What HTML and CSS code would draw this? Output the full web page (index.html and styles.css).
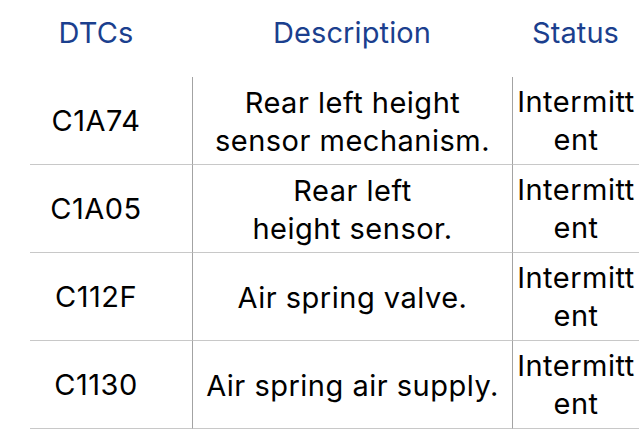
FILE: index.html
```html
<!DOCTYPE html>
<html>
<head>
<meta charset="utf-8">
<link rel="stylesheet" href="styles.css">
</head>
<body>
<div class="table">
  <div class="head">
    <div class="hcell">DTCs</div>
    <div class="hcell">Description</div>
    <div class="hcell">Status</div>
  </div>
  <div class="row">
    <div class="cell code">C1A74</div>
    <div class="cell desc">Rear left height<br>sensor mechanism.</div>
    <div class="cell status">Intermittent</div>
  </div>
  <div class="row">
    <div class="cell code">C1A05</div>
    <div class="cell desc">Rear left<br>height sensor.</div>
    <div class="cell status">Intermittent</div>
  </div>
  <div class="row">
    <div class="cell code">C112F</div>
    <div class="cell desc">Air spring valve.</div>
    <div class="cell status">Intermittent</div>
  </div>
  <div class="row">
    <div class="cell code">C1130</div>
    <div class="cell desc">Air spring air supply.</div>
    <div class="cell status">Intermittent</div>
  </div>
</div>
</body>
</html>
```

FILE: styles.css
```css
html, body {
  margin: 0;
  padding: 0;
  background: #ffffff;
}
body {
  width: 639px;
  height: 435px;
  overflow: hidden;
  font-family: Inter, "Liberation Sans", sans-serif;
  font-size: 29px;
  line-height: 38px;
  letter-spacing: 0.5px;
  color: #000000;
}
.table {
  display: flex;
  flex-direction: column;
}
.head {
  display: grid;
  grid-template-columns: 192px 320px 127px;
  height: 77px;
  box-sizing: border-box;
  padding-top: 14px;
}
.hcell {
  text-align: center;
  color: #1b3f8e;
  letter-spacing: 0.1px;
}
.row {
  display: grid;
  grid-template-columns: 192px 320px 127px;
  height: 88px;
}
.cell {
  display: flex;
  align-items: center;
  justify-content: center;
  text-align: center;
  box-sizing: border-box;
}
.desc {
  padding-top: 2px;
}
.code {
  background: linear-gradient(#c8c8c8, #c8c8c8) no-repeat 30px 100% / calc(100% - 30px) 1px;
}
.desc, .status {
  border-left: 1px solid #a3a3a3;
  border-bottom: 1px solid #c8c8c8;
}
.status {
  word-break: break-all;
  padding: 0 1px;
}
```
